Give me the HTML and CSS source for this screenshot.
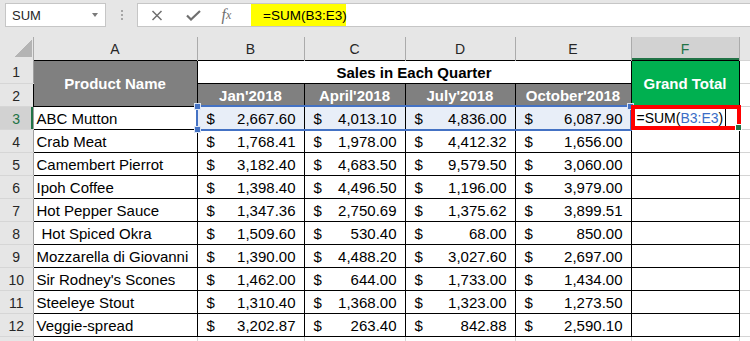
FILE: index.html
```html
<!DOCTYPE html>
<html>

<head>
    <title>Sales in Each Quarter</title>
    <link rel="stylesheet" href="styles.css">
</head>

<body>
    <!-- Name box + formula bar -->
    <div class="bar">
        <div class="namebox"><span>SUM</span><i class="drop"></i></div>
        <div class="grip"><i></i></div>
        <div class="entry">
            <div class="tools">
                <span class="tool">
                    <svg width="12" height="11" viewBox="0 0 12 11"><path d="M1.5 1 L10.5 10 M10.5 1 L1.5 10" stroke="#6f6f6f" stroke-width="1.5" fill="none"/></svg>
                </span>
                <span class="tool">
                    <svg width="15" height="11" viewBox="0 0 15 11"><path d="M1 5.5 L5 9.5 L14 1" stroke="#6f6f6f" stroke-width="2.2" fill="none"/></svg>
                </span>
                <span class="tool fx">f<sub>x</sub></span>
            </div>
            <div class="formula"><span class="mark">=SUM(B3:E3)</span></div>
        </div>
    </div>

    <table class="sheet">
        <colgroup>
            <col class="c-rh">
            <col class="c-a">
            <col class="c-b">
            <col class="c-c">
            <col class="c-d">
            <col class="c-e">
            <col class="c-f">
            <col class="c-rest">
        </colgroup>
        <thead>
            <tr>
                <th class="corner"><i></i></th>
                <th>A</th>
                <th>B</th>
                <th>C</th>
                <th>D</th>
                <th>E</th>
                <th class="on">F</th>
                <th></th>
            </tr>
        </thead>
        <tbody>
            <tr>
                <th>1</th>
                <td class="head grey" rowspan="2">Product Name</td>
                <td class="title" colspan="4">Sales in Each Quarter</td>
                <td class="head green" rowspan="2">Grand Total</td>
                <td class="rest"></td>
            </tr>
            <tr>
                <th>2</th>
                <td class="head grey q">Jan'2018</td>
                <td class="head grey q">April'2018</td>
                <td class="head grey q">July'2018</td>
                <td class="head grey q">October'2018</td>
                <td class="rest"></td>
            </tr>
            <tr>
                <th class="on">3</th>
                <td>ABC Mutton</td>
                <td class="money pick first"><div class="range"><i class="knob tl"></i><i class="knob bl"></i><i class="knob tr"></i></div><div class="acc"><span>$</span><span>2,667.60</span></div></td>
                <td class="money pick"><div class="acc"><span>$</span><span>4,013.10</span></div></td>
                <td class="money pick"><div class="acc"><span>$</span><span>4,836.00</span></div></td>
                <td class="money pick"><div class="acc"><span>$</span><span>6,087.90</span></div></td>
                <td class="active"><div class="edit"></div>=SUM(<span class="ref">B3:E3</span>)<i class="cursor"></i></td>
                <td class="rest"></td>
            </tr>
            <tr>
                <th>4</th>
                <td>Crab Meat</td>
                <td class="money"><div class="acc"><span>$</span><span>1,768.41</span></div></td>
                <td class="money"><div class="acc"><span>$</span><span>1,978.00</span></div></td>
                <td class="money"><div class="acc"><span>$</span><span>4,412.32</span></div></td>
                <td class="money"><div class="acc"><span>$</span><span>1,656.00</span></div></td>
                <td></td>
                <td class="rest"></td>
            </tr>
            <tr>
                <th>5</th>
                <td>Camembert Pierrot</td>
                <td class="money"><div class="acc"><span>$</span><span>3,182.40</span></div></td>
                <td class="money"><div class="acc"><span>$</span><span>4,683.50</span></div></td>
                <td class="money"><div class="acc"><span>$</span><span>9,579.50</span></div></td>
                <td class="money"><div class="acc"><span>$</span><span>3,060.00</span></div></td>
                <td></td>
                <td class="rest"></td>
            </tr>
            <tr>
                <th>6</th>
                <td>Ipoh Coffee</td>
                <td class="money"><div class="acc"><span>$</span><span>1,398.40</span></div></td>
                <td class="money"><div class="acc"><span>$</span><span>4,496.50</span></div></td>
                <td class="money"><div class="acc"><span>$</span><span>1,196.00</span></div></td>
                <td class="money"><div class="acc"><span>$</span><span>3,979.00</span></div></td>
                <td></td>
                <td class="rest"></td>
            </tr>
            <tr>
                <th>7</th>
                <td>Hot Pepper Sauce</td>
                <td class="money"><div class="acc"><span>$</span><span>1,347.36</span></div></td>
                <td class="money"><div class="acc"><span>$</span><span>2,750.69</span></div></td>
                <td class="money"><div class="acc"><span>$</span><span>1,375.62</span></div></td>
                <td class="money"><div class="acc"><span>$</span><span>3,899.51</span></div></td>
                <td></td>
                <td class="rest"></td>
            </tr>
            <tr>
                <th>8</th>
                <td class="indent">Hot Spiced Okra</td>
                <td class="money"><div class="acc"><span>$</span><span>1,509.60</span></div></td>
                <td class="money"><div class="acc"><span>$</span><span>530.40</span></div></td>
                <td class="money"><div class="acc"><span>$</span><span>68.00</span></div></td>
                <td class="money"><div class="acc"><span>$</span><span>850.00</span></div></td>
                <td></td>
                <td class="rest"></td>
            </tr>
            <tr>
                <th>9</th>
                <td>Mozzarella di Giovanni</td>
                <td class="money"><div class="acc"><span>$</span><span>1,390.00</span></div></td>
                <td class="money"><div class="acc"><span>$</span><span>4,488.20</span></div></td>
                <td class="money"><div class="acc"><span>$</span><span>3,027.60</span></div></td>
                <td class="money"><div class="acc"><span>$</span><span>2,697.00</span></div></td>
                <td></td>
                <td class="rest"></td>
            </tr>
            <tr>
                <th>10</th>
                <td>Sir Rodney's Scones</td>
                <td class="money"><div class="acc"><span>$</span><span>1,462.00</span></div></td>
                <td class="money"><div class="acc"><span>$</span><span>644.00</span></div></td>
                <td class="money"><div class="acc"><span>$</span><span>1,733.00</span></div></td>
                <td class="money"><div class="acc"><span>$</span><span>1,434.00</span></div></td>
                <td></td>
                <td class="rest"></td>
            </tr>
            <tr>
                <th>11</th>
                <td>Steeleye Stout</td>
                <td class="money"><div class="acc"><span>$</span><span>1,310.40</span></div></td>
                <td class="money"><div class="acc"><span>$</span><span>1,368.00</span></div></td>
                <td class="money"><div class="acc"><span>$</span><span>1,323.00</span></div></td>
                <td class="money"><div class="acc"><span>$</span><span>1,273.50</span></div></td>
                <td></td>
                <td class="rest"></td>
            </tr>
            <tr>
                <th>12</th>
                <td>Veggie-spread</td>
                <td class="money"><div class="acc"><span>$</span><span>3,202.87</span></div></td>
                <td class="money"><div class="acc"><span>$</span><span>263.40</span></div></td>
                <td class="money"><div class="acc"><span>$</span><span>842.88</span></div></td>
                <td class="money"><div class="acc"><span>$</span><span>2,590.10</span></div></td>
                <td></td>
                <td class="rest"></td>
            </tr>
            <tr class="blank">
                <th></th>
                <td></td><td></td><td></td><td></td><td></td><td></td><td></td>
            </tr>
        </tbody>
    </table>
</body>

</html>
```

FILE: styles.css
```css
* {
    box-sizing: border-box;
}
html, body {
    margin: 0;
}
body {
    width: 750px;
    height: 341px;
    overflow: hidden;
    background-color: #e6e6e6;
    font-family: "Liberation Sans", Arial, sans-serif;
    color: #000;
}

/* Formula bar */
.bar {
    display: flex;
    height: 27px;
    padding-top: 3px;
}
.namebox {
    width: 101px;
    margin-left: 5px;
    display: flex;
    align-items: center;
    justify-content: space-between;
    padding: 0 7px 0 6px;
    background-color: #fff;
    border: 1px solid #c6c6c6;
    font-size: 13px;
    color: #262626;
}
.drop {
    border-left: 3.5px solid transparent;
    border-right: 3.5px solid transparent;
    border-top: 4px solid #7a7a7a;
}
.grip {
    width: 31px;
    display: flex;
    justify-content: center;
    padding-top: 7px;
}
.grip i {
    width: 2px;
    height: 2px;
    background-color: #a6a6a6;
    box-shadow: 0 4px #a6a6a6, 0 8px #a6a6a6;
}
.entry {
    flex: 1;
    display: flex;
    background-color: #fff;
    border: 1px solid #c6c6c6;
    border-right: 0;
}
.tools {
    width: 113px;
    display: flex;
    align-items: center;
}
.tool {
    width: 37px;
    display: flex;
    justify-content: center;
    align-items: center;
}
.tool.fx {
    width: 29px;
    font-family: "Liberation Serif", serif;
    font-style: italic;
    font-size: 16px;
    color: #6f6f6f;
}
.tool.fx sub {
    font-size: 12px;
    vertical-align: -1px;
}
.formula {
    flex: 1;
    display: flex;
}
.mark {
    width: 95px;
    background-color: #ffff00;
    padding-left: 12px;
    font-size: 13.5px;
    line-height: 23px;
}

/* Sheet */
.sheet {
    width: 750px;
    margin-top: 10px;
    border-collapse: collapse;
    table-layout: fixed;
    font-size: 15px;
}
.c-rh { width: 33px; }
.c-a { width: 164px; }
.c-b { width: 107px; }
.c-c { width: 101px; }
.c-d { width: 110px; }
.c-e { width: 116px; }
.c-f { width: 108px; }
.c-rest { width: 11px; }

.sheet tr {
    height: 23px;
}
.sheet th {
    padding: 0;
    font-weight: normal;
    font-size: 14px;
    color: #262626;
    background-color: #e6e6e6;
}
.sheet thead th {
    border-left: 1px solid #ababab;
    padding-top: 2px;
}
.sheet thead th.corner {
    border-left: 0;
    position: relative;
}
.corner i {
    position: absolute;
    right: 1px;
    bottom: 3px;
    width: 17px;
    height: 17px;
    background: linear-gradient(135deg, transparent 50%, #b4b4b4 50%);
}
.sheet thead th.on {
    background-color: #d2d2d2;
    color: #217346;
    box-shadow: inset 0 -2px 0 #217346;
}
.sheet tbody th {
    border-right: 1px solid #9f9f9f;
    border-bottom: 1px solid #d6d6d6;
    padding-top: 2px;
}
.sheet tbody th.on {
    background-color: #d2d2d2;
    color: #217346;
    box-shadow: inset -2px 0 0 #217346;
}

.sheet td {
    border: 1px solid #000;
    background-color: #fff;
    padding: 0 3px 1px;
    vertical-align: bottom;
    line-height: 19px;
    white-space: nowrap;
    overflow: hidden;
}
.sheet td.indent {
    padding-left: 8px;
}
.sheet td.head {
    color: #fff;
    font-weight: bold;
    text-align: center;
}
.sheet td.grey {
    background-color: #808080;
}
.sheet td.green {
    background-color: #00b050;
    vertical-align: middle;
    padding-top: 1px;
}
.sheet td.grey[rowspan] {
    vertical-align: middle;
    padding-top: 1px;
}
.sheet td.title {
    font-weight: bold;
    text-align: center;
}
.sheet td.money {
    padding: 0 8px 1px 9px;
}
.acc {
    display: flex;
    justify-content: space-between;
}

/* B3:E3 range picked by the formula */
.sheet td.pick {
    background-color: #e8eef8;
}
.sheet td.first {
    position: relative;
    overflow: visible;
}
.range {
    position: absolute;
    left: -2px;
    top: -2px;
    width: 436px;
    height: 26px;
    border: 2px solid #4472c4;
    z-index: 2;
}
.knob {
    position: absolute;
    width: 7px;
    height: 7px;
    background-color: #4472c4;
    border: 1px solid #dbe5f5;
}
.knob.tl { left: -4px; top: -4px; }
.knob.bl { left: -4px; bottom: -4px; }
.knob.tr { right: -4px; top: -4px; }

/* Cell being edited */
.sheet td.active {
    position: relative;
    overflow: visible;
    padding-left: 5px;
    font-size: 14px;
}
.edit {
    position: absolute;
    left: -1px;
    top: -2px;
    right: -2px;
    bottom: -1px;
    border: 4px solid #ff0000;
    z-index: 3;
}
.edit::after {
    content: "";
    position: absolute;
    right: -5px;
    bottom: -5px;
    width: 5px;
    height: 5px;
    background-color: #217346;
    border: 1px solid #fff;
}
.ref {
    color: #3b6dc6;
}
.cursor {
    display: inline-block;
    width: 1px;
    height: 17px;
    margin-left: 2px;
    vertical-align: -3px;
    background-color: #000;
}

.sheet td.rest {
    border-top-color: #d4d4d4;
    border-bottom-color: #d4d4d4;
    border-right: 0;
}
.blank td {
    border-color: #d4d4d4;
}
```
